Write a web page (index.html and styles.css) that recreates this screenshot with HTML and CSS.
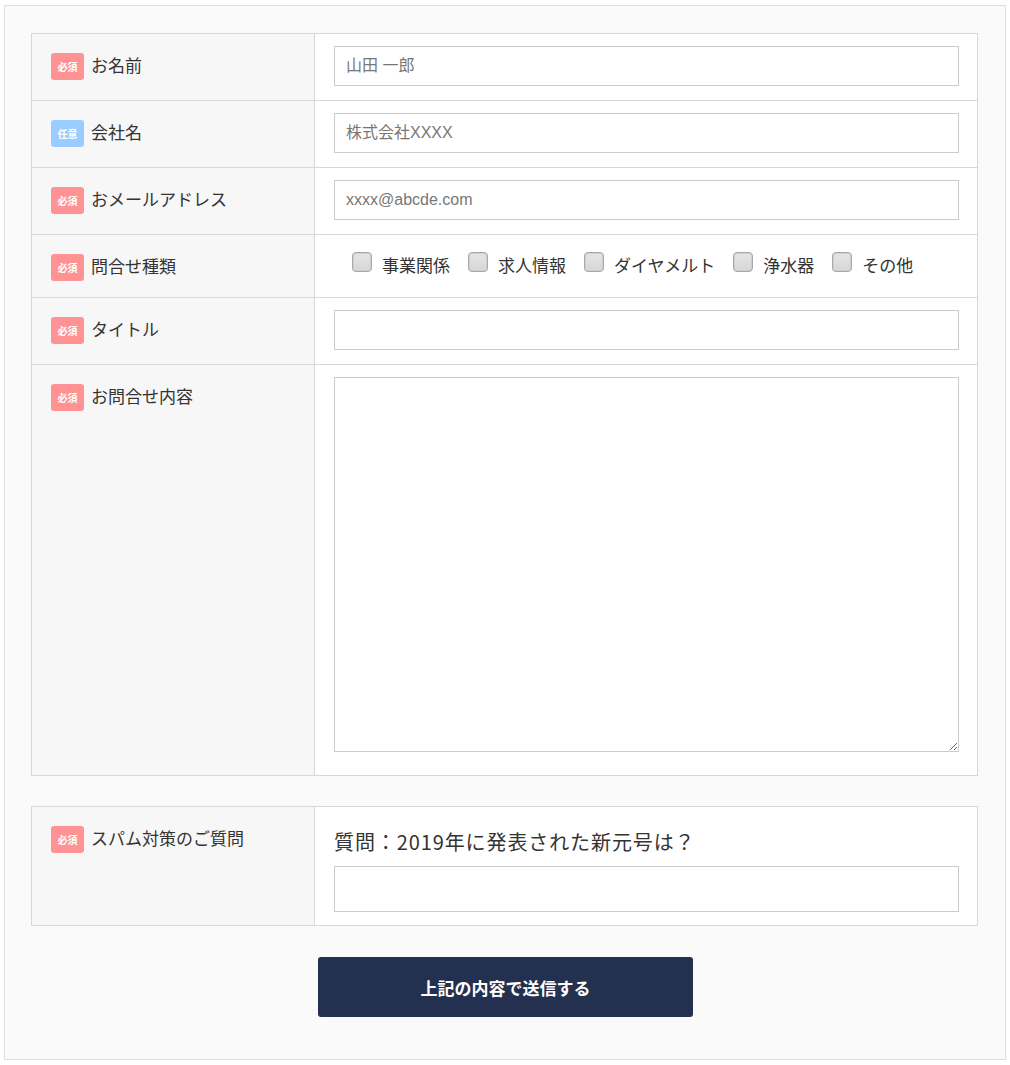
FILE: index.html
```html
<!DOCTYPE html>
<html lang="ja">
<head>
<meta charset="utf-8">
<title>お問い合わせ</title>
<link rel="stylesheet" href="styles.css">
</head>
<body>
<div class="form-wrap">
  <table class="form-table">
    <tr>
      <th><span class="badge req">必須</span><span class="label-text">お名前</span></th>
      <td><input class="text-input" type="text" placeholder="山田 一郎"></td>
    </tr>
    <tr>
      <th><span class="badge opt">任意</span><span class="label-text">会社名</span></th>
      <td><input class="text-input" type="text" placeholder="株式会社XXXX"></td>
    </tr>
    <tr>
      <th><span class="badge req">必須</span><span class="label-text">おメールアドレス</span></th>
      <td><input class="text-input" type="email" placeholder="xxxx@abcde.com"></td>
    </tr>
    <tr>
      <th><span class="badge req">必須</span><span class="label-text">問合せ種類</span></th>
      <td class="td-check">
        <div class="checks">
          <label class="check"><input type="checkbox"><span>事業関係</span></label>
          <label class="check"><input type="checkbox"><span>求人情報</span></label>
          <label class="check"><input type="checkbox"><span>ダイヤメルト</span></label>
          <label class="check"><input type="checkbox"><span>浄水器</span></label>
          <label class="check"><input type="checkbox"><span>その他</span></label>
        </div>
      </td>
    </tr>
    <tr>
      <th><span class="badge req">必須</span><span class="label-text">タイトル</span></th>
      <td><input class="text-input" type="text"></td>
    </tr>
    <tr>
      <th><span class="badge req">必須</span><span class="label-text">お問合せ内容</span></th>
      <td class="td-area"><textarea class="text-area"></textarea></td>
    </tr>
  </table>

  <table class="form-table spam">
    <tr>
      <th><span class="badge req">必須</span><span class="label-text">スパム対策のご質問</span></th>
      <td class="td-spam">
        <p class="question">質問：2019年に発表された新元号は？</p>
        <input class="text-input spam-input" type="text">
      </td>
    </tr>
  </table>

  <div class="submit-wrap">
    <button class="submit" type="button">上記の内容で送信する</button>
  </div>
</div>
</body>
</html>
```

FILE: styles.css
```css
* { box-sizing: border-box; }

body {
  margin: 0;
  background: #ffffff;
  font-family: "Noto Sans CJK JP", "Liberation Sans", sans-serif;
  color: #333333;
}

.form-wrap {
  margin: 5px 0 0 4px;
  width: 1002px;
  height: 1055px;
  border: 1px solid #dddddd;
  background: #fafafa;
  padding: 27px 0 0 26px;
}

.form-table {
  width: 947px;
  border-collapse: collapse;
  background: #ffffff;
}

.form-table th,
.form-table td {
  border: 1px solid #d8d8d8;
  vertical-align: top;
  text-align: left;
}

.form-table th {
  width: 283px;
  background: #f7f7f7;
  padding: 19px 10px 0 19px;
  font-weight: normal;
  white-space: nowrap;
}

.form-table td {
  padding: 12px 18px 14px 19px;
}

.badge {
  display: inline-block;
  vertical-align: top;
  width: 33px;
  height: 27px;
  line-height: 27px;
  border-radius: 3px;
  color: #ffffff;
  font-size: 10px;
  font-weight: bold;
  text-align: center;
}

.badge.req { background: #ff9393; }
.badge.opt { background: #9accff; }

.label-text {
  display: inline-block;
  vertical-align: top;
  margin-left: 7px;
  font-size: 17px;
  line-height: 24px;
  color: #333333;
}

.text-input {
  display: block;
  width: 100%;
  height: 40px;
  border: 1px solid #cccccc;
  background: #ffffff;
  padding: 0 11px;
  font-family: "Liberation Sans", "Noto Sans CJK JP", sans-serif;
  font-size: 16px;
  color: #333333;
  outline: none;
}

.text-input::placeholder { color: #777777; opacity: 1; }

.form-table .td-check {
  padding: 12px 18px 20px 37px;
}

.checks {
  display: flex;
  align-items: center;
  height: 30px;
}

.check {
  display: flex;
  align-items: center;
  margin-right: 18px;
  font-size: 17px;
  color: #333333;
}

.check span {
  position: relative;
  top: 2px;
}

.check input {
  appearance: none;
  -webkit-appearance: none;
  width: 20px;
  height: 20px;
  margin: 0 10px 0 0;
  border: 1px solid #a8a8a8;
  border-radius: 4px;
  background: linear-gradient(#e6e6e6, #d6d6d6);
  box-shadow: inset 0 0 0 1px #cfcfcf;
}

.form-table .td-area {
  padding-bottom: 23px;
}

.text-area {
  display: block;
  width: 100%;
  height: 375px;
  border: 1px solid #cccccc;
  background: #ffffff;
  font-family: "Noto Sans CJK JP", sans-serif;
  font-size: 16px;
  outline: none;
}

.spam {
  margin-top: 30px;
}

.form-table .td-spam {
  padding: 19px 18px 13px 19px;
}

.question {
  margin: 0 0 8px 0;
  font-size: 20px;
  line-height: 32px;
  letter-spacing: 0.9px;
  color: #333333;
}

.spam-input {
  height: 46px;
}

.submit-wrap {
  display: flex;
  justify-content: center;
  padding-top: 31px;
  width: 949px;
}

.submit {
  width: 375px;
  height: 60px;
  border: none;
  border-radius: 3px;
  background: #24304f;
  color: #ffffff;
  font-family: "Noto Sans CJK JP", sans-serif;
  font-size: 17px;
  font-weight: bold;
}
```
